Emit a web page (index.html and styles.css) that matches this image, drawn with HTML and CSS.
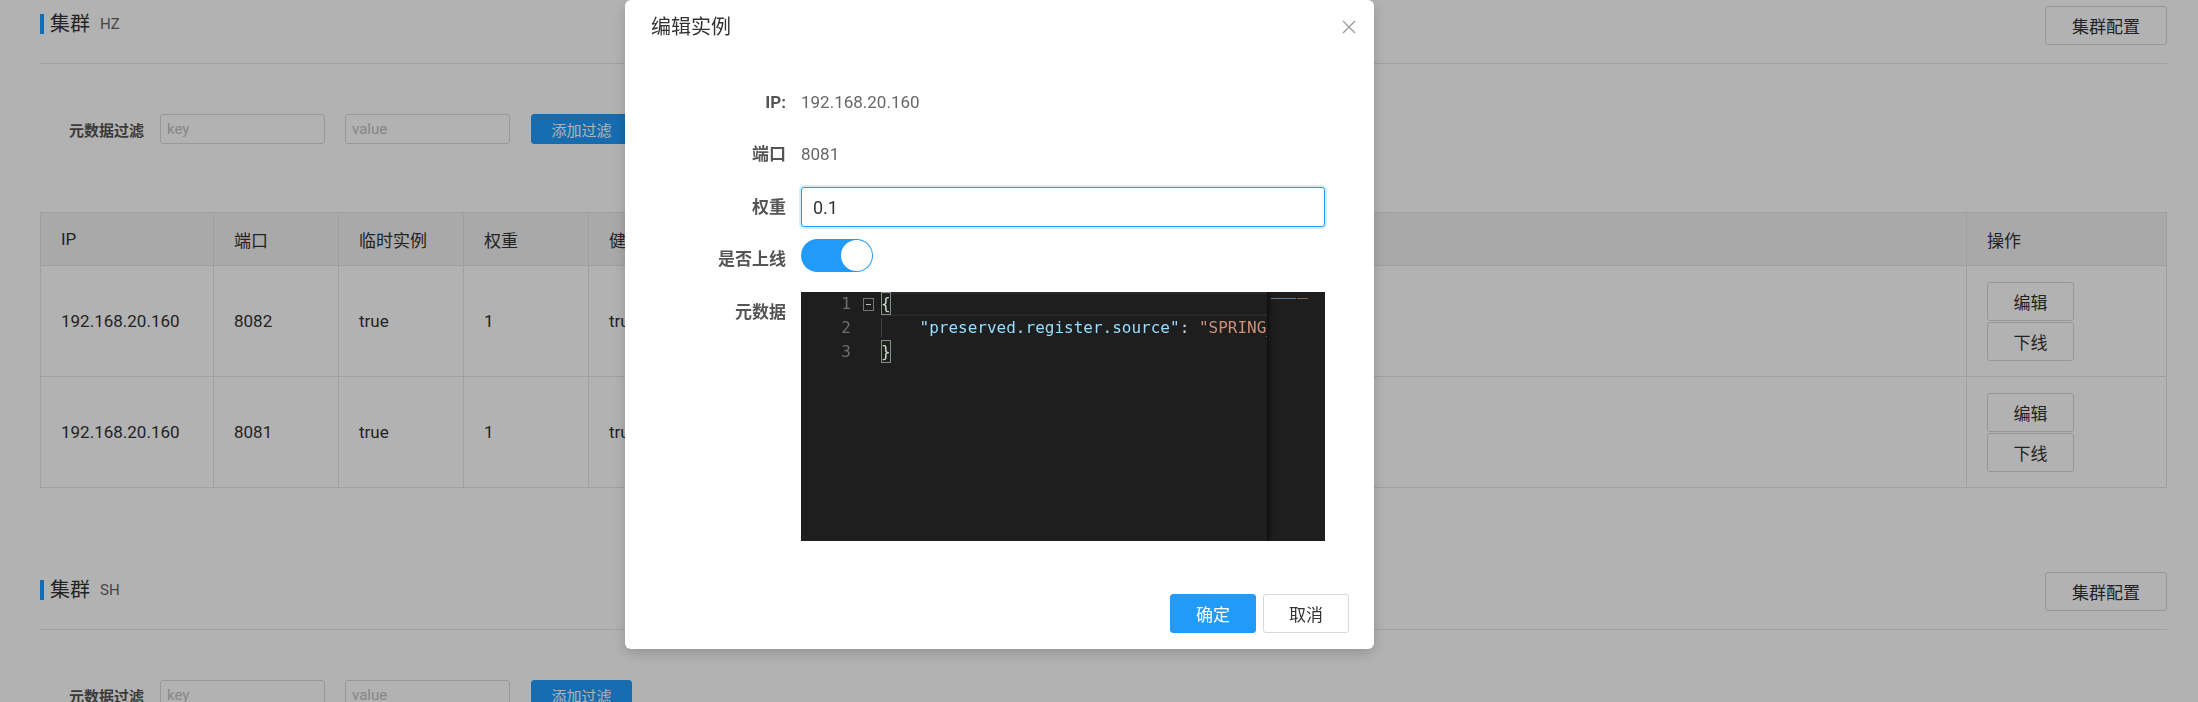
FILE: index.html
```html
<!DOCTYPE html>
<html lang="zh-CN">
<head>
<meta charset="utf-8">
<title>服务详情</title>
<link rel="stylesheet" href="styles.css">
</head>
<body>
<div class="page">
  <section class="cluster">
    <div class="cluster-head">
      <div class="cluster-title"><span class="bar"></span><span class="name">集群</span><span class="cluster-code">HZ</span></div>
      <button class="btn btn-config">集群配置</button>
    </div>
    <div class="filter">
      <span class="filter-label">元数据过滤</span>
      <input class="filter-input" placeholder="key">
      <input class="filter-input" placeholder="value">
      <button class="btn btn-primary btn-filter">添加过滤</button>
    </div>
    <div class="tbl">
      <div class="th">IP</div>
      <div class="th">端口</div>
      <div class="th">临时实例</div>
      <div class="th">权重</div>
      <div class="th">健康状态</div>
      <div class="th"></div>
      <div class="th">操作</div>

      <div class="td">192.168.20.160</div>
      <div class="td">8082</div>
      <div class="td">true</div>
      <div class="td">1</div>
      <div class="td">true</div>
      <div class="td"></div>
      <div class="td ops"><button class="btn btn-op">编辑</button><button class="btn btn-op">下线</button></div>

      <div class="td">192.168.20.160</div>
      <div class="td">8081</div>
      <div class="td">true</div>
      <div class="td">1</div>
      <div class="td">true</div>
      <div class="td"></div>
      <div class="td ops"><button class="btn btn-op">编辑</button><button class="btn btn-op">下线</button></div>
    </div>
  </section>

  <section class="cluster cluster-next">
    <div class="cluster-head">
      <div class="cluster-title"><span class="bar"></span><span class="name">集群</span><span class="cluster-code">SH</span></div>
      <button class="btn btn-config">集群配置</button>
    </div>
    <div class="filter">
      <span class="filter-label">元数据过滤</span>
      <input class="filter-input" placeholder="key">
      <input class="filter-input" placeholder="value">
      <button class="btn btn-primary btn-filter">添加过滤</button>
    </div>
  </section>
</div>

<div class="mask"></div>

<div class="dialog">
  <div class="dlg-head">
    <span class="dlg-title">编辑实例</span>
    <svg class="dlg-close" viewBox="0 0 14 14" width="14" height="14"><path d="M1 1 L13 13 M13 1 L1 13" stroke="#9a9a9a" stroke-width="1.3" fill="none"/></svg>
  </div>
  <div class="dlg-body">
    <div class="form-row">
      <div class="form-label">IP:</div>
      <div class="form-value">192.168.20.160</div>
    </div>
    <div class="form-row mb13">
      <div class="form-label">端口</div>
      <div class="form-value">8081</div>
    </div>
    <div class="form-row">
      <div class="form-label">权重</div>
      <input class="input" value="0.1">
    </div>
    <div class="form-row mb13">
      <div class="form-label">是否上线</div>
      <div class="switch"><span class="knob"></span></div>
    </div>
    <div class="form-row last">
      <div class="form-label">元数据</div>
      <div class="editor">
        <div class="gutter">
          <div class="gl"><span class="ln">1</span><span class="fold"></span></div>
          <div class="gl"><span class="ln">2</span></div>
          <div class="gl"><span class="ln">3</span></div>
        </div>
        <div class="code-area">
          <div class="cl cur"><span class="bm">{</span></div>
          <div class="cl"><span class="ind">    </span><span class="k">"preserved.register.source"</span><span class="p">: </span><span class="s">"SPRING_CLOUD"</span></div>
          <div class="cl"><span class="bm">}</span></div>
        </div>
        <div class="minimap">
          <div class="mm-line"><span class="mm-k"></span><span class="mm-s"></span></div>
        </div>
      </div>
    </div>
  </div>
  <div class="dlg-foot">
    <button class="btn btn-primary btn-dlg">确定</button>
    <button class="btn btn-dlg">取消</button>
  </div>
</div>
</body>
</html>
```

FILE: styles.css
```css
html, body {
  margin: 0;
  padding: 0;
}
body {
  height: 702px;
  overflow: hidden;
  background: #fff;
  color: #333;
  font-family: Roboto, "Noto Sans CJK SC", sans-serif;
}

.page {
  padding: 0 31px 0 40px;
}

.cluster-head {
  display: flex;
  align-items: flex-start;
  justify-content: space-between;
  padding: 6px 0 18px;
  border-bottom: 1px solid #e6e6e6;
}
.cluster-title {
  display: flex;
  align-items: center;
  height: 20px;
  margin-top: 8px;
}
.bar {
  width: 4px;
  height: 20px;
  background: #209bfa;
  margin-right: 6px;
}
.name {
  font-size: 20px;
  line-height: 20px;
  color: #333;
}
.cluster-code {
  font-size: 15px;
  line-height: 20px;
  color: #666;
  margin-left: 10px;
}

.btn {
  box-sizing: border-box;
  height: 39px;
  padding: 0;
  border: 1px solid #d9d9d9;
  border-radius: 3px;
  background: #fff;
  color: #333;
  font-family: Roboto, "Noto Sans CJK SC", sans-serif;
  font-size: 17px;
  cursor: pointer;
}
.btn-primary {
  background: #209bfa;
  border-color: #209bfa;
  color: #fff;
}
.btn-config {
  width: 122px;
}

.filter {
  display: flex;
  align-items: center;
  margin-top: 50px;
  padding-left: 29px;
}
.filter-label {
  font-size: 15px;
  font-weight: bold;
  color: #555;
  margin-right: 16px;
}
.filter-input {
  box-sizing: border-box;
  width: 165px;
  height: 30px;
  margin: 0 20px 0 0;
  padding: 0 6px;
  border: 1px solid #dcdcdc;
  border-radius: 3px;
  font-family: Roboto, "Noto Sans CJK SC", sans-serif;
  font-size: 15px;
  color: #333;
  outline: none;
}
.filter-input::placeholder {
  color: #c2c2c2;
}
.btn-filter {
  width: 101px;
  height: 30px;
  font-size: 15px;
  margin-left: 1px;
}

.tbl {
  display: grid;
  grid-template-columns: 173px 125px 125px 125px 125px 1fr 200px;
  margin-top: 68px;
  border-top: 1px solid #e6e6e6;
  border-left: 1px solid #e6e6e6;
}
.th, .td {
  box-sizing: border-box;
  display: flex;
  align-items: center;
  padding-left: 20px;
  border-right: 1px solid #e6e6e6;
  border-bottom: 1px solid #e6e6e6;
  font-size: 17px;
  color: #333;
  white-space: nowrap;
  overflow: hidden;
}
.th {
  height: 53px;
  background: #f2f2f2;
}
.td {
  height: 111px;
}
.ops {
  flex-direction: column;
  align-items: flex-start;
  justify-content: center;
  gap: 1px;
}
.btn-op {
  width: 87px;
  height: 39px;
}

.cluster-next {
  margin-top: 78px;
}

.mask {
  position: fixed;
  left: 0;
  top: 0;
  right: 0;
  bottom: 0;
  background: rgba(0, 0, 0, 0.3);
}

.dialog {
  position: fixed;
  left: 625px;
  top: 0;
  width: 749px;
  background: #fff;
  border-radius: 6px;
  box-shadow: 0 4px 14px rgba(0, 0, 0, 0.18);
}
.dlg-head {
  padding: 13px 26px 0;
  height: 28px;
}
.dlg-title {
  font-size: 20px;
  line-height: 28px;
  color: #333;
}
.dlg-close {
  position: absolute;
  right: 18px;
  top: 20px;
}
.dlg-body {
  padding-top: 41px;
}
.form-row {
  display: flex;
  align-items: flex-start;
  margin-bottom: 12px;
}
.form-row.mb13 {
  margin-bottom: 13px;
}
.form-row.last {
  margin-bottom: 0;
}
.form-label {
  width: 161px;
  flex: none;
  margin-right: 15px;
  text-align: right;
  font-size: 17px;
  font-weight: bold;
  line-height: 40px;
  color: #555;
}
.form-value {
  font-size: 17px;
  line-height: 40px;
  color: #666;
}
.input {
  box-sizing: border-box;
  width: 524px;
  height: 40px;
  margin: 0;
  padding: 0 11px;
  border: 1px solid #209bfa;
  border-radius: 3px;
  box-shadow: 0 0 0 2px rgba(32, 155, 250, 0.18);
  font-family: Roboto, "Noto Sans CJK SC", sans-serif;
  font-size: 18px;
  color: #333;
  outline: none;
}
.switch {
  box-sizing: border-box;
  display: flex;
  align-items: center;
  justify-content: flex-end;
  width: 72px;
  height: 33px;
  padding: 1px;
  border-radius: 17px;
  background: #209bfa;
}
.knob {
  width: 31px;
  height: 31px;
  border-radius: 50%;
  background: #fff;
}

.editor {
  display: flex;
  flex: none;
  width: 524px;
  height: 249px;
  overflow: hidden;
  background: #1e1e1e;
  font-family: "DejaVu Sans Mono", "Liberation Mono", monospace;
  font-size: 16px;
  line-height: 24px;
}
.gutter {
  width: 80px;
  flex: none;
}
.gl {
  display: flex;
  height: 24px;
}
.ln {
  width: 50px;
  flex: none;
  text-align: right;
  color: #6e6e6e;
}
.fold {
  position: relative;
  box-sizing: border-box;
  width: 11px;
  height: 13px;
  margin: 6px 0 0 12px;
  border: 1px solid #767676;
}
.fold::after {
  content: "";
  position: absolute;
  left: 2px;
  top: 5px;
  width: 5px;
  height: 1px;
  background: #c0c0c0;
}
.code-area {
  width: 386px;
  flex: none;
  overflow: hidden;
}
.cl {
  height: 24px;
  white-space: pre;
  color: #d4d4d4;
}
.cl.cur {
  box-shadow: inset 0 -2px #282828, inset 0 2px #282828;
}
.ind {
  box-shadow: inset 1px 0 #404040;
}
.bm {
  display: inline-block;
  box-sizing: border-box;
  width: 10px;
  height: 23px;
  line-height: 21px;
  border: 1px solid #8a8a8a;
  background: rgba(0, 100, 0, 0.1);
  vertical-align: top;
  text-indent: -1px;
}
.k {
  color: #9cdcfe;
}
.p {
  color: #d4d4d4;
}
.s {
  color: #ce9178;
}
.minimap {
  width: 58px;
  flex: none;
  background: #1e1e1e;
  box-shadow: inset 6px 0 6px -6px #000;
}
.mm-line {
  display: flex;
  margin: 6px 0 0 4px;
  height: 1px;
}
.mm-k {
  width: 25px;
  background: #5d7f95;
}
.mm-s {
  width: 11px;
  margin-left: 1px;
  background: #8a6452;
}

.dlg-foot {
  display: flex;
  justify-content: flex-end;
  gap: 7px;
  padding: 53px 25px 16px;
}
.btn-dlg {
  width: 86px;
}
```
